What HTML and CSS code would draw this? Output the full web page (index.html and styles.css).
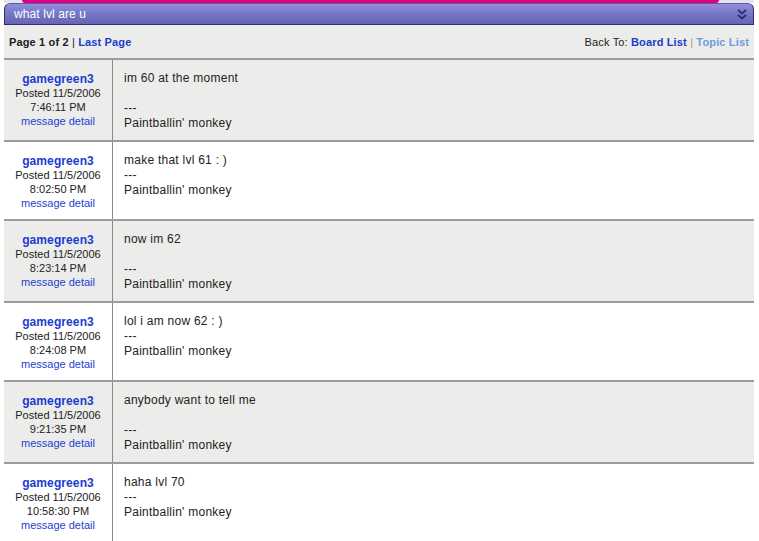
FILE: index.html
```html
<!DOCTYPE html>
<html>
<head>
<meta charset="utf-8">
<link rel="stylesheet" href="styles.css">
</head>
<body>
<div class="page">
  <div class="topstrip"><div class="pink"></div></div>
  <div class="titlebar">
    <span class="title">what lvl are u</span>
    <svg class="chev" width="10" height="11" viewBox="0 0 10 11"><path d="M1 1 L5 4.5 L9 1 M1 6 L5 9.5 L9 6" fill="none" stroke="#2e2e80" stroke-width="2"/></svg>
  </div>
  <div class="nav">
    <div class="nav-left"><b>Page 1 of 2</b> | <a class="lnk">Last Page</a></div>
    <div class="nav-right">Back To: <a class="lnk">Board List</a> <span class="pipe">|</span> <a class="lnk light">Topic List</a></div>
  </div>
  <div class="msgs">
    <div class="row alt">
      <div class="who"><a class="user">gamegreen3</a><div>Posted 11/5/2006</div><div>7:46:11 PM</div><a class="detail">message detail</a></div>
      <div class="body">im 60 at the moment<br><br>---<br>Paintballin' monkey</div>
    </div>
    <div class="row">
      <div class="who"><a class="user">gamegreen3</a><div>Posted 11/5/2006</div><div>8:02:50 PM</div><a class="detail">message detail</a></div>
      <div class="body">make that lvl 61 : )<br>---<br>Paintballin' monkey</div>
    </div>
    <div class="row alt">
      <div class="who"><a class="user">gamegreen3</a><div>Posted 11/5/2006</div><div>8:23:14 PM</div><a class="detail">message detail</a></div>
      <div class="body">now im 62<br><br>---<br>Paintballin' monkey</div>
    </div>
    <div class="row">
      <div class="who"><a class="user">gamegreen3</a><div>Posted 11/5/2006</div><div>8:24:08 PM</div><a class="detail">message detail</a></div>
      <div class="body">lol i am now 62 : )<br>---<br>Paintballin' monkey</div>
    </div>
    <div class="row alt">
      <div class="who"><a class="user">gamegreen3</a><div>Posted 11/5/2006</div><div>9:21:35 PM</div><a class="detail">message detail</a></div>
      <div class="body">anybody want to tell me<br><br>---<br>Paintballin' monkey</div>
    </div>
    <div class="row">
      <div class="who"><a class="user">gamegreen3</a><div>Posted 11/5/2006</div><div>10:58:30 PM</div><a class="detail">message detail</a></div>
      <div class="body">haha lvl 70<br>---<br>Paintballin' monkey</div>
    </div>
  </div>
</div>
</body>
</html>
```
FILE: styles.css
```css
html, body { margin: 0; padding: 0; background: #fff; }
body { font-family: "Liberation Sans", Arial, sans-serif; color: #222; }
.page { width: 750px; margin-left: 4px; }
.topstrip { height: 3px; background: #e4e4ec; padding: 0 35px 0 18px; }
.pink { height: 3px; background: #e0007c; border-radius: 0 0 6px 6px; }
.titlebar {
  height: 20px; display: flex; align-items: center; justify-content: space-between;
  background: linear-gradient(#9090da, #7878c8 45%, #6565b2);
  border: 1px solid #2c2c78; border-top-color: #5a5ab0;
  border-radius: 6px 6px 0 0; padding: 0 6px 0 9px;
}
.title { color: #fff; font-size: 12px; letter-spacing: 0.1px; }
.chev { display: block; }
.nav {
  height: 33px; display: flex; align-items: center; justify-content: space-between;
  background: #ecedea; padding: 0 5px; font-size: 11px; color: #222;
  border-bottom: 2px solid #9c9c9c; letter-spacing: 0.15px;
}
.lnk { color: #1a3cd0; font-weight: bold; }
.lnk.light { color: #6e9be0; }
.pipe { color: #b89a6a; }
.row { display: flex; border-bottom: 2px solid #9c9c9c; background: #fff; }
.row.alt { background: #ecedeb; }
.who {
  width: 108px; border-right: 1px solid #8a8a8a; text-align: center;
  font-size: 11px; line-height: 14px; padding: 12px 0 9px; color: #222;
}
.who a { display: block; }
.user { font-size: 12px; font-weight: bold; color: #1a3cd0; letter-spacing: 0.1px; }
.detail { color: #1f40d0; }
.body { padding: 11px 10px 9px 11px; font-size: 12px; line-height: 15px; color: #222; letter-spacing: 0.25px; }
```
